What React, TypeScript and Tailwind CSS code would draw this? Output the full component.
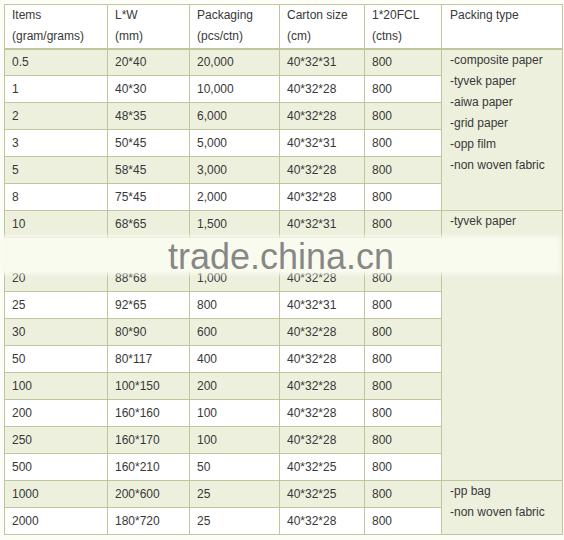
import React from 'react';

type Row = { item: string; lw: string; pack: string; carton: string; fcl: string; green: boolean };

const rows: Row[] = [
  { item: '0.5', lw: '20*40', pack: '20,000', carton: '40*32*31', fcl: '800', green: true },
  { item: '1', lw: '40*30', pack: '10,000', carton: '40*32*28', fcl: '800', green: false },
  { item: '2', lw: '48*35', pack: '6,000', carton: '40*32*28', fcl: '800', green: true },
  { item: '3', lw: '50*45', pack: '5,000', carton: '40*32*31', fcl: '800', green: false },
  { item: '5', lw: '58*45', pack: '3,000', carton: '40*32*28', fcl: '800', green: true },
  { item: '8', lw: '75*45', pack: '2,000', carton: '40*32*28', fcl: '800', green: false },
  { item: '10', lw: '68*65', pack: '1,500', carton: '40*32*31', fcl: '800', green: true },
  { item: '15', lw: '80*65', pack: '1,200', carton: '40*32*28', fcl: '800', green: false },
  { item: '20', lw: '88*68', pack: '1,000', carton: '40*32*28', fcl: '800', green: true },
  { item: '25', lw: '92*65', pack: '800', carton: '40*32*31', fcl: '800', green: false },
  { item: '30', lw: '80*90', pack: '600', carton: '40*32*28', fcl: '800', green: true },
  { item: '50', lw: '80*117', pack: '400', carton: '40*32*28', fcl: '800', green: false },
  { item: '100', lw: '100*150', pack: '200', carton: '40*32*28', fcl: '800', green: true },
  { item: '200', lw: '160*160', pack: '100', carton: '40*32*28', fcl: '800', green: false },
  { item: '250', lw: '160*170', pack: '100', carton: '40*32*28', fcl: '800', green: true },
  { item: '500', lw: '160*210', pack: '50', carton: '40*32*25', fcl: '800', green: false },
  { item: '1000', lw: '200*600', pack: '25', carton: '40*32*25', fcl: '800', green: true },
  { item: '2000', lw: '180*720', pack: '25', carton: '40*32*28', fcl: '800', green: false },
];

// merged "Packing type" cells: starting row index -> [rowSpan, lines]
const packing: Record<number, [number, string[]]> = {
  0: [6, ['-composite paper', '-tyvek paper', '-aiwa paper', '-grid paper', '-opp film', '-non woven fabric']],
  6: [10, ['-tyvek paper']],
  16: [2, ['-pp bag', '-non woven fabric']],
};

const td = 'border border-[#c1c59c] pl-[7px] align-middle';

export default function App() {
  return (
    <div
      className="min-h-[540px] w-[564px] bg-[#fdfdf8] pt-[4px] pl-[4px] text-[12px] leading-[21px] text-[#383838]"
      style={{ fontFamily: '"Liberation Sans", Arial, sans-serif' }}
    >
      <div className="relative w-[558px]">
        <table className="w-[558px] table-fixed border-collapse border border-[#c1c59c]">
          <colgroup>
            <col className="w-[103px]" />
            <col className="w-[82px]" />
            <col className="w-[90px]" />
            <col className="w-[85px]" />
            <col className="w-[77px]" />
            <col className="w-[121px]" />
          </colgroup>
          <thead>
            <tr className="h-[44px] bg-white">
              <td className={`${td} border-b-2`}>Items<br />(gram/grams)</td>
              <td className={`${td} border-b-2`}>L*W<br />(mm)</td>
              <td className={`${td} border-b-2`}>Packaging<br />(pcs/ctn)</td>
              <td className={`${td} border-b-2`}>Carton size<br />(cm)</td>
              <td className={`${td} border-b-2`}>1*20FCL<br />(ctns)</td>
              <td className={`${td} border-b-2 !align-top pl-[8px]`}>Packing type</td>
            </tr>
          </thead>
          <tbody>
            {rows.map((r, i) => (
              <tr key={r.item} className={`h-[27px] ${r.green ? 'bg-[#eef0de]' : 'bg-white'}`}>
                <td className={td}>{r.item}</td>
                <td className={td}>{r.lw}</td>
                <td className={td}>{r.pack}</td>
                <td className={td}>{r.carton}</td>
                <td className={td}>{r.fcl}</td>
                {packing[i] && (
                  <td rowSpan={packing[i][0]} className={`${td} !align-top bg-[#eef0de] pl-[8px] pt-0`}>
                    {packing[i][1].map((l) => (
                      <div key={l}>{l}</div>
                    ))}
                  </td>
                )}
              </tr>
            ))}
          </tbody>
        </table>

        {/* watermark band */}
        <div className="absolute left-[-4px] top-[232px] h-[38px] w-[560px] bg-[#f9fbef] blur-[2px]" />
        <div
          className="pointer-events-none absolute left-[164px] top-[233px] text-[36px] leading-[40px] text-[#808080]/95"
          style={{ fontFamily: '"Liberation Sans", Arial, sans-serif' }}
        >
          trade.china.cn
        </div>
      </div>
    </div>
  );
}
